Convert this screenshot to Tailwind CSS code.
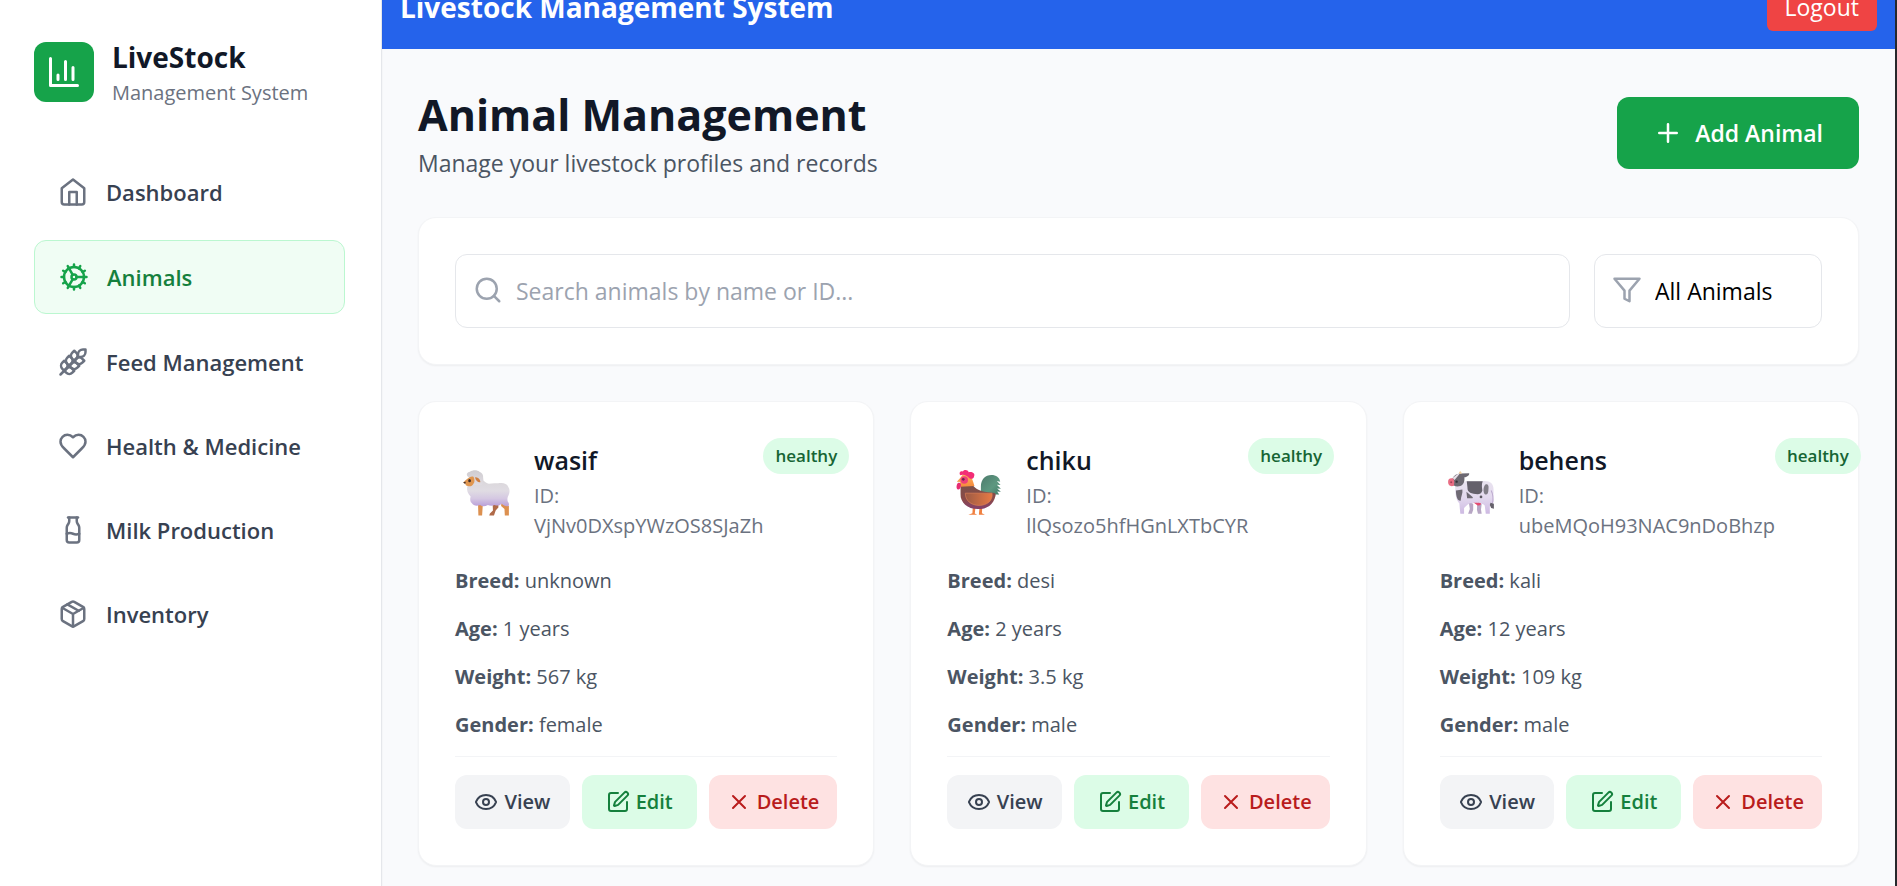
<!DOCTYPE html>
<html lang="en">
<head>
<meta charset="utf-8">
<meta name="viewport" content="width=device-width, initial-scale=1">
<title>Livestock Management System</title>
<script src="https://cdn.jsdelivr.net/npm/@tailwindcss/browser@4"></script>
</head>
<body class="bg-[#f9fafc] font-['Segoe_UI','Open_Sans',sans-serif] text-[#111827]">

<svg class="hidden" aria-hidden="true">
  <symbol id="chart" viewBox="0 0 24 24"><path d="M3 3v18h18M18 17V9M13 17V5M8 17v-3"/></symbol>
  <symbol id="home" viewBox="0 0 24 24"><path d="m3 9 9-7 9 7v11a2 2 0 0 1-2 2H5a2 2 0 0 1-2-2z"/><path d="M9 22V12h6v10"/></symbol>
  <symbol id="cog" viewBox="0 0 24 24"><path d="M12 20a8 8 0 1 0 0-16 8 8 0 0 0 0 16Z"/><path d="M12 14a2 2 0 1 0 0-4 2 2 0 0 0 0 4Z"/><path d="M12 2v2M12 22v-2m5 .66-1-1.73M11 10.27 7 3.34M20.66 17l-1.73-1M3.34 7l1.73 1M14 12h8M2 12h2M20.66 7l-1.73 1M3.34 17l1.73-1M17 3.34l-1 1.73M11 13.73l-4 6.93"/></symbol>
  <symbol id="wheat" viewBox="0 0 24 24"><path d="M2 22 16 8"/><path d="M3.47 12.53 5 11l1.53 1.53a3.5 3.5 0 0 1 0 4.94L5 19l-1.53-1.53a3.5 3.5 0 0 1 0-4.94Z"/><path d="M7.47 8.53 9 7l1.53 1.53a3.5 3.5 0 0 1 0 4.94L9 15l-1.53-1.53a3.5 3.5 0 0 1 0-4.94Z"/><path d="M11.47 4.53 13 3l1.53 1.53a3.5 3.5 0 0 1 0 4.94L13 11l-1.53-1.53a3.5 3.5 0 0 1 0-4.94Z"/><path d="M20 2h2v2a4 4 0 0 1-4 4h-2V6a4 4 0 0 1 4-4Z"/><path d="M11.47 17.47 13 19l-1.53 1.53a3.5 3.5 0 0 1-4.94 0L5 19l1.53-1.53a3.5 3.5 0 0 1 4.94 0Z"/><path d="M15.47 13.47 17 15l-1.53 1.53a3.5 3.5 0 0 1-4.94 0L9 15l1.53-1.53a3.5 3.5 0 0 1 4.94 0Z"/><path d="M19.47 9.47 21 11l-1.53 1.53a3.5 3.5 0 0 1-4.94 0L13 11l1.53-1.53a3.5 3.5 0 0 1 4.94 0Z"/></symbol>
  <symbol id="heart" viewBox="0 0 24 24"><path d="M19 14c1.49-1.46 3-3.21 3-5.5A5.5 5.5 0 0 0 16.5 3c-1.76 0-3 .5-4.5 2-1.5-1.5-2.74-2-4.5-2A5.5 5.5 0 0 0 2 8.5c0 2.3 1.5 4.05 3 5.5l7 7Z"/></symbol>
  <symbol id="milk" viewBox="0 0 24 24"><path d="M8 2h8"/><path d="M9 2v2.789a4 4 0 0 1-.672 2.219l-.656.984A4 4 0 0 0 7 10.212V20a2 2 0 0 0 2 2h6a2 2 0 0 0 2-2v-9.789a4 4 0 0 0-.672-2.219l-.656-.984A4 4 0 0 1 15 4.788V2"/><path d="M7 15a6.472 6.472 0 0 1 5 0 6.47 6.47 0 0 0 5 0"/></symbol>
  <symbol id="package" viewBox="0 0 24 24"><path d="m7.5 4.27 9 5.15"/><path d="M21 8a2 2 0 0 0-1-1.73l-7-4a2 2 0 0 0-2 0l-7 4A2 2 0 0 0 3 8v8a2 2 0 0 0 1 1.73l7 4a2 2 0 0 0 2 0l7-4A2 2 0 0 0 21 16Z"/><path d="m3.3 7 8.7 5 8.7-5M12 22V12"/></symbol>
  <symbol id="plus" viewBox="0 0 24 24"><path d="M5 12h14M12 5v14"/></symbol>
  <symbol id="search" viewBox="0 0 24 24"><circle cx="11" cy="11" r="8"/><path d="m21 21-4.3-4.3"/></symbol>
  <symbol id="filter" viewBox="0 0 24 24"><path d="M22 3H2l8 9.46V19l4 2v-8.54z"/></symbol>
  <symbol id="eye" viewBox="0 0 24 24"><path d="M2.062 12.348a1 1 0 0 1 0-.696 10.75 10.75 0 0 1 19.876 0 1 1 0 0 1 0 .696 10.75 10.75 0 0 1-19.876 0"/><circle cx="12" cy="12" r="3"/></symbol>
  <symbol id="edit" viewBox="0 0 24 24"><path d="M12 3H5a2 2 0 0 0-2 2v14a2 2 0 0 0 2 2h14a2 2 0 0 0 2-2v-7"/><path d="M18.375 2.625a1 1 0 0 1 3 3l-9.013 9.014a2 2 0 0 1-.853.505l-2.873.84a.5.5 0 0 1-.62-.62l.84-2.873a2 2 0 0 1 .506-.852z"/></symbol>
  <symbol id="close" viewBox="0 0 24 24"><path d="M18 6 6 18M6 6l12 12"/></symbol>
</svg>

<svg class="absolute size-0" aria-hidden="true">
  <defs>
    <linearGradient id="wool" x1="0" y1="0" x2="0" y2="1"><stop offset="0" stop-color="#dad7da"/><stop offset=".4" stop-color="#e0dce3"/><stop offset=".7" stop-color="#d5c8e2"/><stop offset="1" stop-color="#b99fd8"/></linearGradient>
    <linearGradient id="curl" x1="0" y1="0" x2="0" y2="1"><stop offset="0" stop-color="#cfccd0"/><stop offset="1" stop-color="#e0dce2"/></linearGradient>
    <linearGradient id="body" x1="0" y1="0" x2="0" y2="1"><stop offset="0" stop-color="#7a5048"/><stop offset=".6" stop-color="#8a4a48"/><stop offset="1" stop-color="#84406c"/></linearGradient>
    <linearGradient id="wing" x1="0" y1="0" x2="1" y2="0"><stop offset="0" stop-color="#9c5a44"/><stop offset="1" stop-color="#e87a44"/></linearGradient>
    <linearGradient id="neck" x1="0" y1="0" x2="0" y2="1"><stop offset="0" stop-color="#ffb35c"/><stop offset="1" stop-color="#f58a3c"/></linearGradient>
    <linearGradient id="tail" x1="0" y1="0" x2="1" y2="1"><stop offset="0" stop-color="#4d7a6c"/><stop offset=".6" stop-color="#5d9880"/><stop offset="1" stop-color="#3f7a64"/></linearGradient>
    <linearGradient id="hide" x1="0" y1="0" x2="0" y2="1"><stop offset="0" stop-color="#e9e3ef"/><stop offset=".5" stop-color="#e3d9ee"/><stop offset="1" stop-color="#cdb9e2"/></linearGradient>
  </defs>
  <symbol id="sheep" viewBox="135 216 180 180">
    <path fill="#b06a48" d="M246 338h17v12l-8 9-5 15h-14l2-6 9-9z"/>
    <path fill="#dc9050" d="M203 342h14l-2 32h-11zM272 336l22 10v28h-12l-1-19-10-9z"/>
    <path fill="url(#wool)" d="M172 284c6-4 14-8 22-14h24c6 6 10 9 17 10 10-2 18-2 27-1 14-3 26 0 30 10 5 7 5 18 1 25-4 7-4 14-2 19 4 4 4 9 2 13-8 2-15-2-20-7-7 6-14 7-21 4-6 3-14 3-20 0-9 5-17 5-23 0-10 4-20 2-24-5-6-5-6-12-4-20-8-8-12-18-10-28z"/>
    <path fill="url(#curl)" d="M171 257c-3-6 1-11 8-12 8-6 22-6 28 0 8 3 12 10 11 17 2 9 0 17-5 22h-22l-6-22c-5 1-10 0-14-5z"/>
    <path fill="#e0964f" d="M178 261c5-3 9-3 12-1 3 9 4 15-1 21-3 7-10 8-16 6-5-1-8-4-7-7-3 0-6-1-6-4 5-5 10-11 18-15z"/>
    <path d="M194 261c9 0 15 6 16 14-3 3-14-1-16-14z" fill="#cf7f42"/>
    <ellipse cx="178" cy="271" rx="4" ry="5" fill="#3c2c2c"/><path d="M159 276l8-2-2 7z" fill="#3c2c2c"/>
  </symbol>
  <symbol id="rooster" viewBox="143 216 180 180">
    <path fill="#f08040" d="M219 350h8l-2 18 7 4h-26l12-5zM239 350h8l-1 17 9 5h-18z"/>
    <path fill="url(#tail)" d="M243 306v-18c0-21 13-34 31-34 14 0 24 7 26 20l-10-2 11 12-11-1 12 12-11-1 11 10-11-1 6 9h-22z"/>
    <path fill="url(#body)" d="M183 286l36-3c8 14 22 20 58 24 9 0 11 4 9 9-6 26-25 39-52 39-31 0-52-21-51-44z"/>
    <path fill="url(#wing)" stroke="#dc8057" stroke-width="2" d="M197 308h79c3 22-15 36-38 36-25 0-41-15-41-36z"/>
    <path fill="url(#neck)" d="M182 289v-20c2-14 10-20 20-19 10 1 15 14 22 37z"/>
    <path fill="#f32d76" d="M182 255c-5-9 2-13 8-11 4-7 15-5 17 2 10-2 20 3 16 12-1 8-9 9-14 6-8-9-17-13-27-9z"/>
    <path fill="#f5a04b" d="M172 274l12-13 3 14z"/>
    <circle cx="194" cy="269" r="11" fill="#ee3f78"/><circle cx="191" cy="267" r="4" fill="#6e2350"/>
    <path fill="#e72c72" d="M175 278c7-3 11 2 9 8-1 8-5 13-9 11-6-3-4-14 0-19z"/>
  </symbol>
  <symbol id="cow" viewBox="150 216 180 180">
    <path fill="#b7a6c4" d="M235 335l13 4v18l-4 12h-11l5-14zM260 335l13 4-2 17 2 13h-11l-3-12z"/>
    <path fill="#e44b70" d="M247 334h24c2 9-5 12-10 10z"/>
    <path fill="url(#hide)" d="M195 282l34-10h53c17 0 27 9 26 28v34l-11 13v22h-12l-3-25c-9-8-18-8-32-8-11 0-16 3-23 10l-6 6v17h-11l-3-31c-8-10-13-22-12-56z"/>
    <path d="M301 300q8 16 4 38" fill="none" stroke="#bba9cd" stroke-width="3"/>
    <path fill="#65616b" d="M299 336l10 3v15l-8-2-4-9zM229 273h47c-4 10-2 18-1 27-2 8-8 11-14 11-17-1-31-5-30-20z"/>
    <path fill="#817d86" d="M285 282c8-2 9 7 8 14 0 12-3 17-9 16-7-2-8-23 1-30z"/>
    <path fill="#6f6a74" d="M197 300l19-3c2 11-4 20-5 33-8 2-14-10-14-30zM228 304l19 16-1 3h-16z"/><circle cx="271" cy="319" r="4" fill="#5d5862"/>
    <path fill="#6d6972" d="M187 264c5-9 13-13 22-14l27-1c2 6-8 12-14 12 1 12-2 22-12 26-11 3-23 0-25-8z"/>
    <path fill="#e8e0e8" d="M187 263l18-14 2 3-14 17z"/><path fill="#f2cf9e" d="M207 251c-2-5 0-7 4-8l4 7z"/>
    <path fill="#e96d84" d="M174 273c0-8 6-10 12-9 7 1 7 14 5 22-8 3-18 1-17-13z"/><circle cx="183" cy="276" r="3" fill="#a34158"/><circle cx="199" cy="274" r="3.500" fill="#332f38"/>
  </symbol>
</svg>

<div class="flex h-screen overflow-hidden border-r-2 border-[#26282c]">
  <aside class="relative z-10 w-[382px] shrink-0 border-r border-gray-200 bg-white py-9 pl-[34px] pr-9 shadow-xs">
    <div class="mb-12 flex items-center gap-[18px]">
      <div class="flex size-[60px] shrink-0 items-center justify-center rounded-xl bg-[#16a34a] text-white">
        <svg class="size-9 fill-none stroke-current stroke-2 [stroke-linecap:round] [stroke-linejoin:round]"><use href="#chart"/></svg>
      </div>
      <div>
        <p class="text-[28px] leading-[42px] font-bold">LiveStock</p>
        <p class="text-[20px] leading-[30px] whitespace-nowrap text-[#6b7280]">Management System</p>
      </div>
    </div>
    <nav id="nav" class="flex flex-col gap-3"></nav>
  </aside>

  <div class="min-w-0 flex-1">
    <header class="-mt-[35px] flex items-center justify-between bg-[#2563eb] p-[18px] text-white">
      <h1 class="text-[28px] leading-[42px] font-bold">Livestock Management System</h1>
      <button type="button" class="h-12 rounded-md bg-[#ef4444] px-[18px] text-[23px] leading-9">Logout</button>
    </header>

    <main class="flex flex-col gap-9 p-9">
      <div class="flex items-center justify-between">
        <div>
          <h2 class="text-[43px] leading-[60px] font-bold">Animal Management</h2>
          <p class="text-[23px] leading-9 text-[#4b5563]">Manage your livestock profiles and records</p>
        </div>
        <button type="button" class="flex h-[72px] items-center gap-3 rounded-xl bg-[#16a34a] px-9 text-[23px] font-semibold text-white">
          <svg class="size-[30px] fill-none stroke-current stroke-2 [stroke-linecap:round] [stroke-linejoin:round]"><use href="#plus"/></svg>
          Add Animal
        </button>
      </div>

      <div class="flex gap-6 rounded-[18px] border border-gray-100 bg-white p-9 shadow-xs">
        <div class="relative flex-1">
          <svg class="absolute top-[21px] left-[18px] size-[30px] fill-none stroke-[#9ca3af] stroke-2 [stroke-linecap:round] [stroke-linejoin:round]"><use href="#search"/></svg>
          <input type="text" aria-label="Search animals" placeholder="Search animals by name or ID..." class="h-[74px] w-full rounded-xl border border-gray-200 pl-[60px] pr-6 text-[23px] placeholder:text-[#9ca3af]">
        </div>
        <div class="relative w-[228px]">
          <svg class="absolute top-[21px] left-[18px] size-[30px] fill-none stroke-[#9ca3af] stroke-2 [stroke-linecap:round] [stroke-linejoin:round]"><use href="#filter"/></svg>
          <select aria-label="Filter animals" class="h-[74px] w-full appearance-none rounded-xl border border-gray-200 pl-[60px] text-[23px] text-black">
            <option>All Animals</option>
          </select>
        </div>
      </div>

      <div id="cards" class="grid grid-cols-3 gap-9"></div>
    </main>
  </div>
</div>

<script>
const nav = [
  ['home', 'Dashboard'], ['cog', 'Animals'], ['wheat', 'Feed Management'],
  ['heart', 'Health & Medicine'], ['milk', 'Milk Production'], ['package', 'Inventory']
];
document.getElementById('nav').innerHTML = nav.map(([icon, label]) => {
  const active = label === 'Animals';
  const box = active ? 'h-[74px] border border-[#bbf7d0] bg-[#f0fdf4] text-[#15803d]' : 'h-[72px] text-[#374151]';
  const tint = active ? 'stroke-[#16a34a]' : 'stroke-[#6b7280]';
  return `<a href="#" class="flex items-center gap-[18px] rounded-xl px-6 text-[22px] font-semibold whitespace-nowrap ${box}">
    <svg class="size-[30px] shrink-0 fill-none stroke-2 [stroke-linecap:round] [stroke-linejoin:round] ${tint}"><use href="#${icon}"/></svg>${label.replace('&', '&amp;')}</a>`;
}).join('');

const animals = [
  { art: 'sheep', name: 'wasif', status: 'healthy', id: 'VjNv0DXspYWzOS8SJaZh', breed: 'unknown', age: 1, weight: 567, gender: 'female' },
  { art: 'rooster', name: 'chiku', status: 'healthy', id: 'llQsozo5hfHGnLXTbCYR', breed: 'desi', age: 2, weight: 3.5, gender: 'male' },
  { art: 'cow', name: 'behens', status: 'healthy', id: 'ubeMQoH93NAC9nDoBhzp', breed: 'kali', age: 12, weight: 109, gender: 'male' }
];
const icon = id => `<svg class="size-6 shrink-0 fill-none stroke-current stroke-2 [stroke-linecap:round] [stroke-linejoin:round]"><use href="#${id}"/></svg>`;
document.getElementById('cards').innerHTML = animals.map(a => `
  <article class="min-w-0 rounded-[18px] border border-gray-100 bg-white p-9 shadow-xs">
    <div class="flex h-[108px] items-start justify-between">
      <div class="flex h-full items-center gap-[18px]">
        <svg class="size-[61px] shrink-0" role="img" aria-label="${a.art}"><use href="#${a.art}"/></svg>
        <div class="pb-1">
          <h3 class="text-[25px] leading-[42px] font-semibold">${a.name}</h3>
          <p class="text-[20px] leading-[30px] text-[#6b7280]">ID: ${a.id}</p>
        </div>
      </div>
      <span class="flex h-9 items-center rounded-full bg-[#dcfce7] px-3 text-[17px] font-semibold text-[#166534]">${a.status}</span>
    </div>
    <div class="flex flex-col gap-[18px] pt-5 pb-4 text-[20px] leading-[30px] text-[#4b5563]">
      <p><strong>Breed:</strong> ${a.breed}</p>
      <p><strong>Age:</strong> ${a.age} years</p>
      <p><strong>Weight:</strong> ${a.weight} kg</p>
      <p><strong>Gender:</strong> ${a.gender}</p>
    </div>
    <div class="flex gap-3 border-t border-gray-100 pt-[18px] text-[20px] font-semibold">
      <button type="button" class="flex h-[54px] flex-1 items-center justify-center gap-1.5 rounded-xl bg-[#f3f4f6] px-[18px] text-[#374151]">${icon('eye')}View</button>
      <button type="button" class="flex h-[54px] flex-1 items-center justify-center gap-1.5 rounded-xl bg-[#dcfce7] px-[18px] text-[#15803d]">${icon('edit')}Edit</button>
      <button type="button" class="flex h-[54px] flex-1 items-center justify-center gap-1.5 rounded-xl bg-[#fee2e2] px-[18px] text-[#b91c1c]">${icon('close')}Delete</button>
    </div>
  </article>`).join('');
</script>
</body>
</html>
